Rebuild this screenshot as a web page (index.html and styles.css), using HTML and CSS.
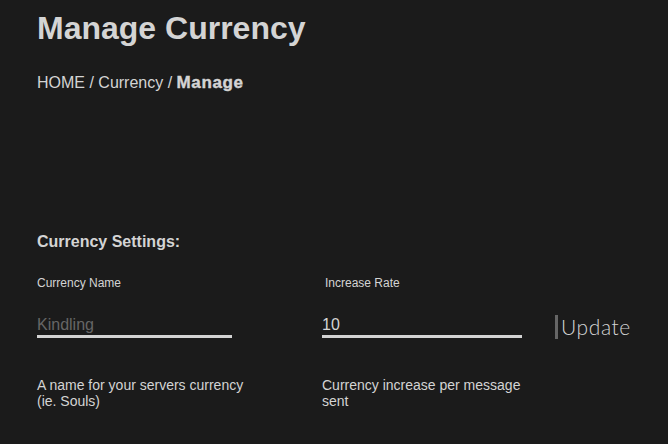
FILE: index.html
```html
<!DOCTYPE html>
<html>
<head>
<meta charset="utf-8">
<link rel="stylesheet" href="styles.css">
</head>
<body>
<main class="page">
  <h1 class="title">Manage Currency</h1>
  <nav class="crumbs">HOME / Currency / <b class="crumb-current">Manage</b></nav>
  <section class="settings">
    <h2 class="settings-title">Currency Settings:</h2>
    <div class="form">
      <label class="label">Currency Name</label>
      <label class="label label-indent">Increase Rate</label>
      <span></span>
      <input class="field" type="text" placeholder="Kindling">
      <input class="field field-wide" type="text" value="10">
      <button class="update">Update</button>
      <p class="desc">A name for your servers currency (ie. Souls)</p>
      <p class="desc">Currency increase per message sent</p>
      <span></span>
    </div>
  </section>
</main>
</body>
</html>
```
FILE: styles.css
```css
html, body {
  margin: 0;
  padding: 0;
  background: #1b1b1b;
}
body {
  font-family: "Liberation Sans", Arial, sans-serif;
  color: #d4d4d4;
  width: 668px;
  height: 444px;
  overflow: hidden;
}
.page {
  padding: 10px 0 0 37px;
}
.title {
  margin: 0;
  font-size: 32px;
  font-weight: bold;
  line-height: 37px;
}
.crumbs {
  margin-top: 27px;
  font-size: 16px;
  line-height: 18px;
}
.crumb-current {
  font-size: 17px;
  letter-spacing: 0.6px;
  -webkit-text-stroke: 0.4px #d4d4d4;
}
.settings {
  margin-top: 141px;
}
.settings-title {
  margin: 0;
  font-size: 16px;
  line-height: 18px;
  font-weight: bold;
}
.form {
  margin-top: 25px;
  display: grid;
  grid-template-columns: 285px 233px auto;
  row-gap: 0;
  align-items: start;
}
.label {
  font-size: 12px;
  line-height: 14px;
  height: 14px;
  margin-bottom: 25px;
}
.label-indent {
  padding-left: 3px;
}
.field {
  box-sizing: content-box;
  width: 195px;
  height: 20px;
  padding: 0;
  margin: 0;
  border: none;
  border-bottom: 3px solid #d3d3d3;
  background: transparent;
  color: #d4d4d4;
  font-family: "Liberation Sans", Arial, sans-serif;
  font-size: 16px;
  line-height: 20px;
  outline: none;
}
.field-wide {
  width: 200px;
}
.field::placeholder {
  color: #666666;
}
.update {
  margin: 0;
  padding: 0 0 0 3px;
  height: 24px;
  align-self: start;
  justify-self: start;
  background: transparent;
  border: none;
  border-left: 3px solid #666666;
  color: #d4d4d4;
  font-family: Lato, "Open Sans", sans-serif;
  font-weight: 300;
  font-size: 21px;
  letter-spacing: 0.6px;
  line-height: 24px;
}
.desc {
  margin: 38px 0 0 0;
  width: 215px;
  font-size: 14px;
  line-height: 16px;
}
```
